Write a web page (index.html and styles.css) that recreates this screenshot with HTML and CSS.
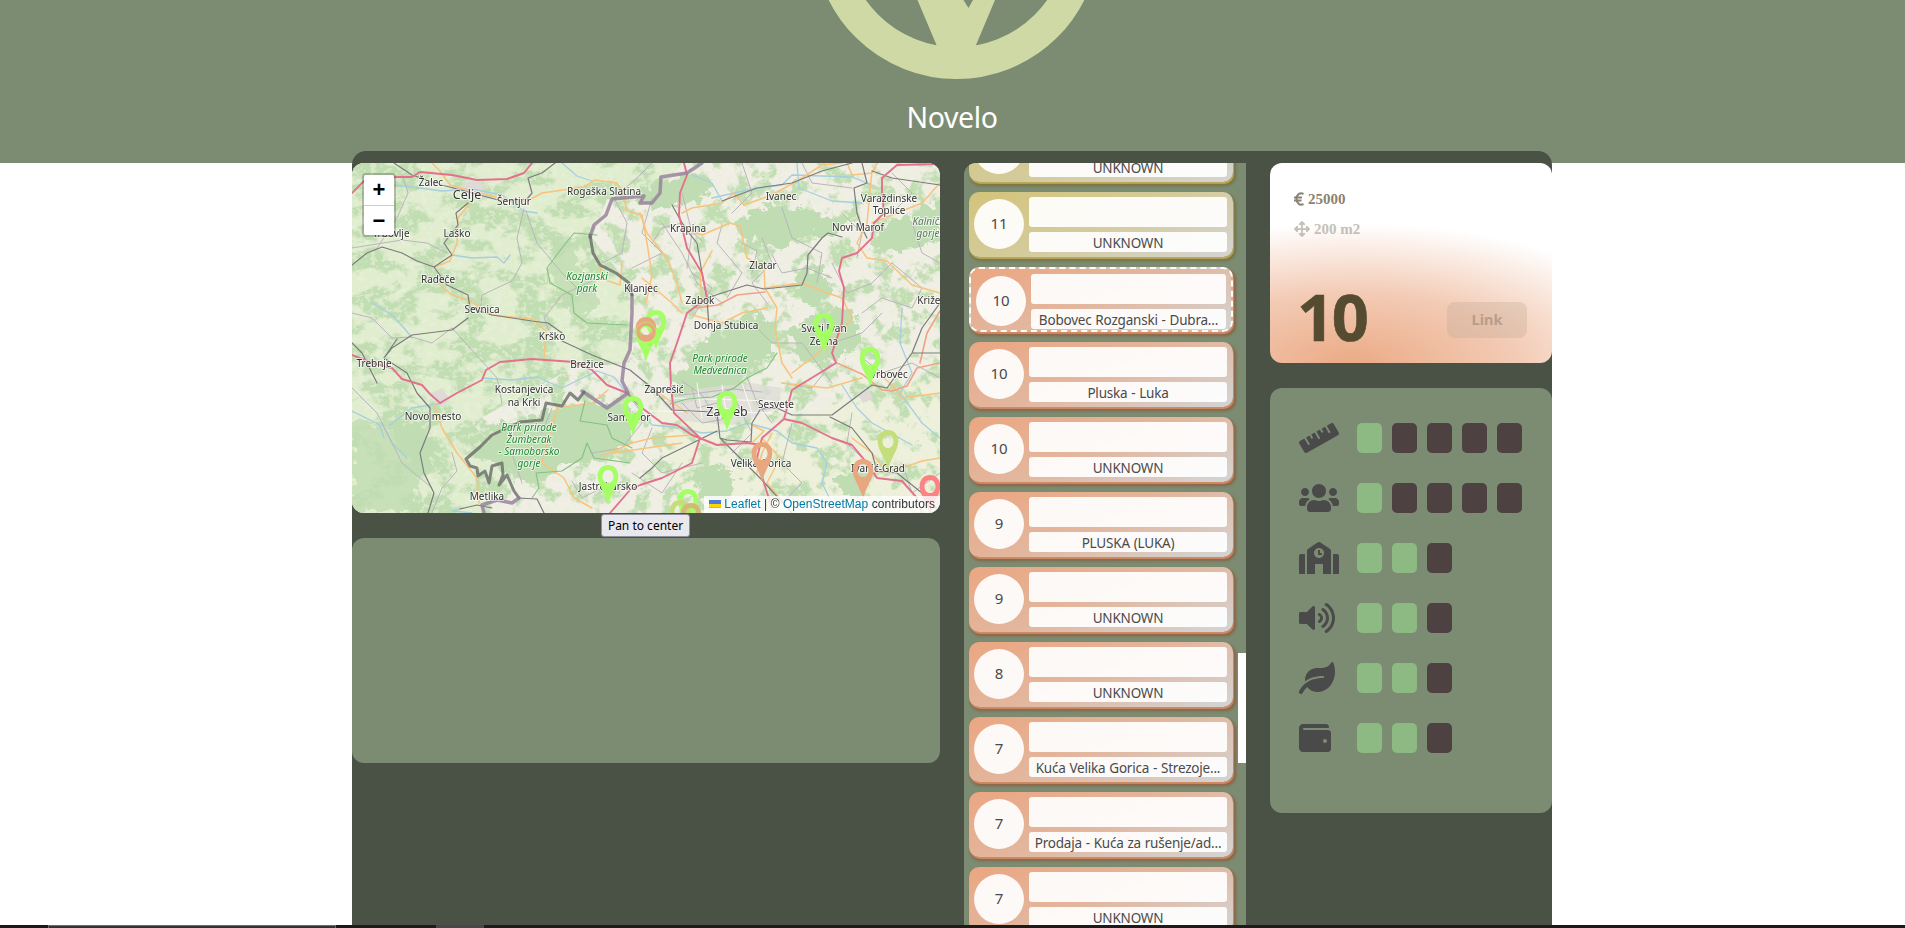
FILE: index.html
```html
<!DOCTYPE html>
<html lang="en">
<head>
<meta charset="utf-8">
<title>Novelo</title>
<link rel="stylesheet" href="styles.css">
</head>
<body>
<header class="header">
  <svg class="logo" width="290" height="80" viewBox="812 0 290 80">
    <circle cx="956.5" cy="-64" r="127" fill="none" stroke="#cfd9a6" stroke-width="32"/>
    <path d="M917.500 0L936.500 45L940 55H972L976 45L995 0H973L968.500 8L963.500 0Z" fill="#cfd9a6"/>
  </svg>
  <h1 class="title">Novelo</h1>
</header>
<main class="board">
  <section class="col-left">
    <div class="map">
      <svg class="map-canvas" width="588" height="350" viewBox="0 0 588 350">
        <defs>
          <filter id="woods" x="0" y="0" width="100%" height="100%" color-interpolation-filters="sRGB">
            <feTurbulence type="fractalNoise" baseFrequency=".03 .045" numOctaves="7" seed="8"/>
            <feColorMatrix values="0 0 0 0 .755  0 0 0 0 .865  0 0 0 0 .70  9 0 0 0 -4.1"/>
            <feComposite in2="SourceGraphic" operator="in"/>
          </filter>
          <filter id="patches" x="0" y="0" width="100%" height="100%" color-interpolation-filters="sRGB">
            <feTurbulence type="fractalNoise" baseFrequency=".05" numOctaves="6" seed="21"/>
            <feColorMatrix values="0 0 0 0 .755  0 0 0 0 .865  0 0 0 0 .70  10 0 0 0 -5.1"/>
            <feComposite in2="SourceGraphic" operator="in"/>
          </filter>
          <filter id="meadow" x="0" y="0" width="100%" height="100%" color-interpolation-filters="sRGB">
            <feTurbulence type="fractalNoise" baseFrequency=".16 .2" numOctaves="4" seed="4"/>
            <feColorMatrix values="0 0 0 0 .91  0 0 0 0 .945  0 0 0 0 .85  9 0 0 0 -4.7"/>
            <feComposite in2="SourceGraphic" operator="in"/>
          </filter>
          <filter id="ragged" x="0" y="0" width="100%" height="100%" color-interpolation-filters="sRGB">
            <feTurbulence type="fractalNoise" baseFrequency=".09" numOctaves="4" seed="3"/>
            <feDisplacementMap in="SourceGraphic" scale="26" xChannelSelector="R" yChannelSelector="G"/>
          </filter>
          <path id="pin" fill-rule="evenodd" d="M0-40C-6-40-10.300-35.500-10.300-29C-10.300-20-4-15 0 0C4-15 10.300-20 10.300-29C10.300-35.500 6-40 0-40ZM0-35C3.200-35 5.500-32.500 5.500-28.500S3.200-22 0-22S-5.500-24.500-5.500-28.500S-3.200-35 0-35Z"/>
        </defs>
        <rect width="588" height="350" fill="#f1eee5"/>
        <path d="M0 0H330L300 40L255 36L240 75L280 125L278 200L220 205L120 260L165 310L130 350H0Z" fill="#e1edcf"/>
        <path d="M330 350L300 240L420 260L588 210V350Z" fill="#eff0dc"/>
        <path d="M0 0H330L300 40L255 36L240 75L280 125L278 200L220 205L120 260L165 310L130 350H0Z" filter="url(#woods)"/>
        <path d="M330 0H588V350H130L165 310L120 260L220 205L278 200L280 125L240 75L255 36L300 40Z" filter="url(#patches)"/>
        <rect width="588" height="350" filter="url(#meadow)" opacity=".6"/>
        <g fill="#c0dcb2" filter="url(#ragged)">
          <path d="M380 60L400 49L430 42L470 52L495 62L480 75L450 72L430 85L400 80L385 72Z"/>
          <path d="M290 25L320 12L345 10L365 25L350 36L325 43L300 45L288 38Z"/>
          <path d="M520 75L545 55L588 40V78L560 82L530 92Z"/>
          <path d="M318 240L328 205L345 188L375 158L405 150L425 160L424 185L400 205L385 225L365 232L340 235Z"/>
          <path d="M116 292L150 262L195 250L235 238L275 236L285 280L250 295L210 302L190 320L160 315L145 300Z"/>
          <path d="M200 80L215 72L228 98L250 140L232 156L222 150L200 130Z" opacity=".8"/>
          <path d="M0 255L40 268L65 300L68 350H0Z" opacity=".8"/>
          <path d="M35 265L60 255L85 290L70 320Z"/>
          <path d="M440 165L470 145L500 148L510 170L495 195L460 200L440 190Z"/>
          <path d="M340 310L365 300L385 315L380 335L350 345Z"/>
          <path d="M448 110L470 100L480 130L465 145L450 135Z"/>
          <path d="M480 318L510 305L520 330L500 340Z"/>
        </g>
        <g fill="#dedbd7">
          <path d="M310 240L350 225L400 220L430 225L425 245L380 262L330 258Z" opacity=".75"/>
          <path d="M105 25l14-8 12 4 2 12-14 4zM78 230l12-4 8 10-9 8zM505 230l12-4 4 10-10 4zM505 300l15-2 5 10-14 3z"/>
        </g>
        <g fill="none" stroke-linejoin="round" stroke-linecap="round">
          <!-- Rivers -->
          <g stroke="#a5cfe0" stroke-width="1.300">
            <path d="M40 22L60 24L90 28L120 26L150 32L172 48L185 50M100 92L120 95L145 94L152 100L158 92M20 140L40 152L52 165L60 175"/>
            <path d="M130 215L160 217L185 214L210 225L245 208L262 214L276 232L300 262L330 265L350 270L375 268L395 260L425 268L440 280L465 285L475 300L470 320L480 340L520 342L588 338"/>
            <path d="M30 260L40 280L55 295M0 248L28 262L32 275M120 350L100 348L112 345M360 35L400 26L430 22L440 12L500 14L520 22M445 0L447 25L480 38L510 40M340 12L360 20L370 38M490 222L505 245L520 260L560 282M550 145L548 180L560 210L548 230L570 260L588 275M210 0L225 13L240 18M90 240L60 245L38 262"/>
          </g>
          <!-- Local roads -->
          <g stroke="#b9b5bd" stroke-width="1">
            <path d="M0 150L20 155L40 175L60 174L80 180L100 165M50 12L56 30L45 55L25 85M0 85L50 77L75 80L95 90M172 46L165 75L170 100L160 118L130 132L128 150M174 48L185 80L210 110L230 130L245 128M198 170L192 155L210 132L240 118M300 0L285 15L262 35L275 60L270 90L250 100M300 35L290 70L310 90L280 105M330 30L340 70L335 105M0 225L25 250L50 300L80 325M80 350L90 325L105 308L100 290M150 240L145 215L100 165M158 285L170 320M260 320L230 335L220 318M200 245L190 270"/>
            <path d="M370 62L365 80L390 110L375 135M410 75L420 100L400 120L415 140M430 45L440 75L470 90L465 120M340 110L360 125L340 155M310 60L330 90L345 120L370 140M480 100L495 130L520 120L540 100M490 50L510 70L505 95M540 100L570 125L560 145L530 135L510 150M470 150L480 180L510 170L530 150M560 60L570 90L588 100M400 160L420 180L450 180L480 220M430 220L460 225L480 200M385 240L400 270L380 290M330 240L350 260L380 255M340 225L345 245L365 240M300 265L290 290L310 310L350 300M440 260L430 300L450 320L430 340M500 250L495 280L515 300M550 300L560 330L588 310M450 0L460 20L500 25M390 0L400 30L380 50M540 10L560 30L540 50M510 195L530 210L560 200L588 215M280 310L310 330L330 300M240 290L270 285L290 260M310 225L330 232L380 226L410 229M330 218L350 232L365 257M395 214L405 240L420 260M300 80L310 65L330 60L350 78M390 80L405 88L400 110M420 92L430 110L455 105L480 115"/>
          </g>
          <g stroke="#fbf9f4" stroke-width="1"><path d="M320 235L420 238M345 220L350 255M370 222L375 256M390 220L400 250M300 248L420 250"/></g>
          <!-- Secondary roads -->
          <g stroke="#f8c37c" stroke-width="1.500">
            <path d="M80 0L88 8L98 22L116 27L132 31M132 31L160 38L175 38L190 30L232 24L243 17L265 20L271 30L275 48L290 52L295 80L300 112L294 140M248 100L250 116L268 122L270 100M118 40L106 55L105 80L98 98L83 104M88 122L100 132L118 138L140 152L180 156L194 168L192 195M82 242L90 265L105 290L125 315L127 340M256 227L240 240L205 245L198 270L190 300L212 315L222 335L240 345"/>
            <path d="M330 50L340 45L370 40L382 30L392 42L420 32L450 15L470 2L490 0M330 65L350 72L378 60L388 63L395 95L412 105L413 125M360 88L348 110L350 140M290 115L320 140L330 150M288 50L295 70L315 95L325 120L330 140M412 125L450 120L470 128L490 135L500 155L485 175L460 195L440 210M413 125L425 145L423 165L430 200L440 215M495 0L500 12L520 10L525 0M520 8L515 60L505 80L515 95L535 98L560 122L588 130M520 60L570 40L588 20M588 230L550 235L540 222L520 205M340 152L370 160L390 150L415 145M300 225L335 250M250 293L280 280L300 275L340 272M260 290L330 280M400 262L412 268L400 280M410 275L428 295L415 320L440 350M420 270L410 290L405 310M520 310L550 305L570 298L588 295M500 275L520 290L535 310M430 220L475 225L510 215"/>
          </g>
          <g stroke="#f2a285" stroke-width="1.600"><path d="M344 145L366 142L385 132L413 129M485 200L510 211L530 227L540 228L555 223L565 205L588 200M588 148L575 170L568 200"/></g>
          <!-- Railways -->
          <g stroke="#7b7c7b" stroke-width="1.200">
            <path d="M42 0L60 12L90 22L120 30L150 38M152 38L175 36L180 30L176 15L190 10L203 0M116 40L104 50L106 62L92 80L100 92L82 104L65 98L50 90L30 84L15 90L0 102M82 104L95 122L116 132L118 145L140 152L180 158L196 160L210 170M210 178L240 192L278 207L300 225L320 247L360 249M116 155L100 167L60 172L40 185L32 195M45 176L32 195L55 210L65 230L78 245L78 265L68 290L72 310L82 330L76 350M166 335L185 336L192 350M108 346L125 342L140 345M0 180L10 190L25 220"/>
            <path d="M320 42L333 65L345 80L350 110L355 135L357 165M355 135L370 130L395 122L412 126L450 122L455 110L456 92L470 75L476 70L490 74M370 38L405 25L440 20L470 8L500 0M510 0L515 20L502 25L505 50L510 65L515 75M588 22L540 15L520 8M588 140L570 165L560 190L535 225L520 222L480 252L440 252L425 245L410 246M365 250L368 275L375 277L399 279M399 279L400 260L408 247M368 275L410 317L440 350M478 254L500 265L520 290L525 308L545 310L570 330L588 350M365 268L310 295L300 305L288 315M560 190L588 190"/>
          </g>
          <!-- Motorways -->
          <g stroke="#e4718c" stroke-width="1.900">
            <path d="M0 30L12 18L45 14L60 14L68 9L100 12L125 17L155 16L172 10L180 0M0 192L20 200L40 205L50 216L70 222L78 231L88 240L105 230L130 217L134 207L148 199L180 196L222 199L240 207L255 222L275 230L290 245L310 260L325 262L340 272L365 282L395 280L410 282"/>
            <path d="M332 0L335 12L328 30L327 52L335 85L350 110L355 135L335 150L325 180L318 200L319 225L322 250L348 275L340 300L310 315L288 322L278 327L258 350M588 1L545 2L530 15L530 28L532 50L522 60L520 75L505 90L490 95L487 108L492 125L490 160L480 190L484 200L440 227L432 256L410 275L405 295L412 320L420 345M432 256L450 260L480 275L500 282L515 300L525 315L550 318L565 335L570 350"/>
          </g>
          <!-- Park outlines -->
          <path d="M245 72L222 70L210 85L195 105L198 120L220 132L222 150L235 160L275 162M233 238L228 258L255 262L260 275L280 285M184 310L210 308L230 295L235 280L242 295L278 300M184 310L187 325L180 335M318 241L335 236L360 234L382 225L395 215L415 205L425 190" stroke="#83c083" stroke-width="1.100"/>
          <!-- National border -->
          <path d="M350 0L338 8L335 10L309 14L308 30L300 40L288 40L292 33L260 36L254 52L242 62L238 74M280 132L280 150L278 187L272 200L270 218L276 230L255 245L230 228" stroke="#957d9b" stroke-width="3.500" opacity=".8"/>
          <path d="M238 72L241 90L248 102L264 110L277 120L280 132M232 229L226 237L218 230L210 243L194 240L190 257L168 259L140 272L128 284L114 296L118 303L125 305L126 313L133 308L137 320L140 303L150 300L151 312L147 322L155 312L162 328L167 335" stroke="#696b69" stroke-width="3" opacity=".8"/>
          <path d="M167 335L160 340L145 337L130 342L132 350" stroke="#957d9b" stroke-width="3.500" opacity=".8"/>
        </g>
        <g class="labels">
          <text x="79" y="23">Žalec</text><text class="city" x="115" y="36">Celje</text><text x="162" y="42">Šentjur</text><text x="252" y="32">Rogaška Slatina</text><text x="39" y="74">Trbovlje</text><text x="105" y="74">Laško</text><text x="86" y="120">Radeče</text><text x="130" y="150">Sevnica</text><text x="200" y="177">Krško</text><text x="289" y="129">Klanjec</text>
          <text x="429" y="37">Ivanec</text><text x="537" y="39">Varaždinske</text><text x="537" y="51">Toplice</text><text x="336" y="69">Krapina</text><text x="506" y="68">Novi Marof</text><text x="411" y="106">Zlatar</text><text x="348" y="141">Zabok</text><text x="374" y="166">Donja Stubica</text><text x="472" y="169">Sveti Ivan</text><text x="472" y="182">Zelina</text><text x="583" y="141">Križevci</text>
          <text x="22" y="204">Trebnje</text><text x="235" y="205">Brežice</text><text x="172" y="230">Kostanjevica</text><text x="172" y="243">na Krki</text><text x="81" y="257">Novo mesto</text><text x="277" y="258">Samobor</text><text x="135" y="337">Metlika</text><text x="256" y="327">Jastrebarsko</text>
          <text x="312" y="230">Zaprešić</text><text x="424" y="245">Sesvete</text><text x="537" y="215">Vrbovec</text><text class="city" x="375" y="253">Zagreb</text><text x="409" y="304">Velika Gorica</text><text x="526" y="309">Ivanić-Grad</text>
          <g class="park"><text x="235" y="117">Kozjanski</text><text x="235" y="129">park</text><text x="368" y="199">Park prirode</text><text x="368" y="211">Medvednica</text><text x="177" y="268">Park prirode</text><text x="177" y="280">Žumberak</text><text x="177" y="292">- Samoborsko</text><text x="177" y="304">gorje</text></g>
          <g class="hills"><text x="579" y="62">Kalničko</text><text x="576" y="74">gorje</text></g>
        </g>
        <use href="#pin" x="304" y="187" fill="#a4ff62"/><use href="#pin" x="294" y="194" fill="#e8a77e"/><use href="#pin" x="294" y="199" fill="#a4ff62"/><circle cx="294" cy="169" r="8" fill="none" stroke="#e8a77e" stroke-width="3.500"/><use href="#pin" x="472" y="190" fill="#a4ff62"/><use href="#pin" x="518" y="224" fill="#a4ff62"/><use href="#pin" x="281" y="273" fill="#a4ff62"/><use href="#pin" x="375" y="268" fill="#a4ff62"/><use href="#pin" x="256" y="342" fill="#a4ff62"/><use href="#pin" x="410" y="319" fill="#e8a77e"/><use href="#pin" x="536" y="307" fill="#c4de7c"/><use href="#pin" x="511" y="336" fill="#e8a77e"/><use href="#pin" x="578" y="352" fill="#ff8282"/><use href="#pin" x="336" y="366" fill="#a4ff62"/><use href="#pin" x="328" y="377" fill="#c4de7c"/><use href="#pin" x="339" y="380" fill="#d3b878"/>
      </svg>
      <div class="zoom"><span>+</span><span>−</span></div>
      <div class="credit"><svg width="12" height="8" viewBox="0 0 12 8"><path fill="#4c7be1" d="M0 0h12v4H0z"/><path fill="#ffd500" d="M0 4h12v3H0z"/><path fill="#e0bc00" d="M0 7h12v1H0z"/></svg> <a>Leaflet</a> | © <a>OpenStreetMap</a> contributors</div>
    </div>
    <div class="pan-row"><button class="pan">Pan to center</button></div>
    <div class="panel"></div>
  </section>
  <section class="list">
    <div class="cards">
      <article class="card olive"><b class="score">11</b><div class="body"><div class="thumb"></div><div class="name">UNKNOWN</div></div></article>
      <article class="card olive"><b class="score">11</b><div class="body"><div class="thumb"></div><div class="name">UNKNOWN</div></div></article>
      <article class="card selected"><b class="score">10</b><div class="body"><div class="thumb"></div><div class="name">Bobovec Rozganski - Dubra...</div></div></article>
      <article class="card"><b class="score">10</b><div class="body"><div class="thumb"></div><div class="name">Pluska - Luka</div></div></article>
      <article class="card"><b class="score">10</b><div class="body"><div class="thumb"></div><div class="name">UNKNOWN</div></div></article>
      <article class="card"><b class="score">9</b><div class="body"><div class="thumb"></div><div class="name">PLUSKA (LUKA)</div></div></article>
      <article class="card"><b class="score">9</b><div class="body"><div class="thumb"></div><div class="name">UNKNOWN</div></div></article>
      <article class="card"><b class="score">8</b><div class="body"><div class="thumb"></div><div class="name">UNKNOWN</div></div></article>
      <article class="card"><b class="score">7</b><div class="body"><div class="thumb"></div><div class="name">Kuća Velika Gorica - Strezoje...</div></div></article>
      <article class="card"><b class="score">7</b><div class="body"><div class="thumb"></div><div class="name">Prodaja - Kuća za rušenje/ad...</div></div></article>
      <article class="card"><b class="score">7</b><div class="body"><div class="thumb"></div><div class="name">UNKNOWN</div></div></article>
    </div>
    <div class="thumb-bar"></div>
  </section>
  <section class="col-right">
    <div class="summary">
      <div class="fact price"><svg width="10" height="14" viewBox="0 0 10 14" fill="none" stroke="currentColor" stroke-width="2"><path d="M9.500 2C6 .2 2.500 2.500 2.500 7S6 13.800 9.500 12M0 5.500H8M0 8.500H7.500"/></svg>25000</div>
      <div class="fact area"><svg width="16" height="16" viewBox="0 0 512 512" fill="currentColor"><path d="M352.201 425.775l-79.196 79.196c-9.373 9.373-24.568 9.373-33.941 0l-79.196-79.196c-15.119-15.119-4.411-40.971 16.971-40.970h51.162L228 284H127.196v51.162c0 21.382-25.851 32.090-40.971 16.971L7.029 272.937c-9.373-9.373-9.373-24.569 0-33.941L86.225 159.800c15.119-15.119 40.971-4.411 40.971 16.971V228H228V127.196h-51.230c-21.382 0-32.090-25.851-16.971-40.971l79.196-79.196c9.373-9.373 24.568-9.373 33.941 0l79.196 79.196c15.119 15.119 4.411 40.971-16.971 40.971h-51.162V228h100.804v-51.162c0-21.382 25.851-32.090 40.970-16.971l79.196 79.196c9.373 9.373 9.373 24.569 0 33.941L425.773 352.200c-15.119 15.119-40.971 4.411-40.970-16.971V284H284v100.804h51.230c21.382 0 32.090 25.851 16.971 40.971z"/></svg>200 m2</div>
      <div class="total"><strong>10</strong><span class="link">Link</span></div>
    </div>
    <div class="stats">
      <div class="row"><svg width="40" height="32" viewBox="0 0 640 512"><path d="M635.7 167.2L556.1 31.7c-8.8-15-28.3-20.1-43.5-11.5l-69 39.1L503.3 161c2.2 3.8.9 8.5-2.9 10.7l-13.8 7.8c-3.8 2.2-8.7.9-10.9-2.9L416 75l-55.2 31.3 27.9 47.4c2.2 3.8.9 8.5-2.9 10.7l-13.8 7.8c-3.8 2.2-8.7.9-10.9-2.9L333.2 122 278 153.3 337.8 255c2.2 3.7.9 8.5-2.9 10.7l-13.8 7.8c-3.8 2.2-8.7.9-10.9-2.9l-59.7-101.7-55.2 31.3 27.9 47.4c2.2 3.8.9 8.5-2.9 10.7l-13.8 7.8c-3.8 2.2-8.7.9-10.9-2.9l-27.9-47.5-55.2 31.3 59.7 101.7c2.2 3.7.9 8.5-2.9 10.7l-13.8 7.8c-3.8 2.2-8.7.9-10.9-2.9L84.900 262.900l-69 39.100C.7 310.700-4.600 329.800 4.200 344.800l79.600 135.600c8.800 15 28.300 20.100 43.500 11.500L624.100 210c15.200-8.600 20.400-27.800 11.600-42.800z"/></svg><i class="on"></i><i></i><i></i><i></i><i></i></div>
      <div class="row"><svg width="40" height="32" viewBox="0 0 640 512"><path d="M96 224c35.300 0 64-28.700 64-64s-28.700-64-64-64-64 28.700-64 64 28.700 64 64 64zm448 0c35.300 0 64-28.700 64-64s-28.700-64-64-64-64 28.700-64 64 28.700 64 64 64zm32 32h-64c-17.600 0-33.500 7.100-45.100 18.600 40.300 22.100 68.900 62 75.100 109.400h66c17.700 0 32-14.300 32-32v-32c0-35.300-28.700-64-64-64zm-256 0c61.900 0 112-50.100 112-112S381.900 32 320 32 208 82.100 208 144s50.100 112 112 112zm76.800 32h-8.300c-20.800 10-43.900 16-68.500 16s-47.600-6-68.500-16h-8.300C179.600 288 128 339.600 128 403.200V432c0 26.500 21.500 48 48 48h288c26.500 0 48-21.500 48-48v-28.800c0-63.600-51.600-115.200-115.200-115.200zm-223.700-13.400C161.500 263.100 145.600 256 128 256H64c-35.300 0-64 28.700-64 64v32c0 17.700 14.300 32 32 32h65.900c6.300-47.400 34.900-87.300 75.200-109.400z"/></svg><i class="on"></i><i></i><i></i><i></i><i></i></div>
      <div class="row"><svg width="40" height="32" viewBox="0 0 640 512"><path d="M0 224v272c0 8.840 7.160 16 16 16h80V192H32c-17.670 0-32 14.330-32 32zm360-48h-24v-40c0-4.420-3.580-8-8-8h-16c-4.420 0-8 3.580-8 8v64c0 4.420 3.580 8 8 8h48c4.420 0 8-3.580 8-8v-16c0-4.420-3.580-8-8-8zm137.750-63.960l-160-106.670a32.020 32.020 0 0 0-35.500 0l-160 106.670A32.002 32.002 0 0 0 128 138.660V512h128V368c0-8.840 7.160-16 16-16h96c8.840 0 16 7.160 16 16v144h128V138.670c0-10.700-5.350-20.690-14.250-26.630zM320 256c-44.180 0-80-35.820-80-80s35.820-80 80-80 80 35.820 80 80-35.820 80-80 80zm288-64h-64v320h80c8.840 0 16-7.160 16-16V224c0-17.670-14.330-32-32-32z"/></svg><i class="on"></i><i class="on"></i><i></i></div>
      <div class="row"><svg width="40" height="32" viewBox="0 0 640 512"><path d="M215.030 71.050L126.060 160H24c-13.260 0-24 10.740-24 24v144c0 13.250 10.740 24 24 24h102.060l88.970 88.950c15.030 15.030 40.970 4.470 40.970-16.970V88.020c0-21.460-25.960-31.980-40.970-16.970zm233.320-51.080c-11.170-7.330-26.180-4.240-33.510 6.950-7.340 11.170-4.220 26.180 6.950 33.510 66.270 43.490 105.820 116.600 105.820 195.580 0 78.980-39.550 152.090-105.820 195.580-11.170 7.320-14.290 22.340-6.950 33.500 7.040 10.710 21.930 14.560 33.510 6.950C528.270 439.580 576 351.330 576 256S528.270 72.430 448.350 19.970zM480 256c0-63.530-32.060-121.940-85.770-156.240-11.190-7.140-26.030-3.820-33.120 7.460s-3.780 26.210 7.410 33.360C408.270 165.970 432 209.110 432 256s-23.730 90.020-63.480 115.420c-11.190 7.140-14.500 22.070-7.410 33.360 6.510 10.360 21.120 15.140 33.120 7.460C447.940 377.940 480 319.540 480 256zm-141.770-76.870c-11.580-6.330-26.190-2.160-32.610 9.450-6.390 11.610-2.160 26.200 9.450 32.610C327.980 228.280 336 241.630 336 256c0 14.380-8.020 27.720-20.920 34.810-11.610 6.410-15.840 21-9.450 32.610 6.430 11.660 21.050 15.800 32.610 9.450 28.230-15.550 45.770-45 45.770-76.880s-17.540-61.320-45.780-76.860z"/></svg><i class="on"></i><i class="on"></i><i></i></div>
      <div class="row"><svg width="40" height="32" viewBox="0 0 640 512"><path d="M546.200 9.700c-5.600-12.500-21.600-13-28.300-1.200C486.900 62.400 431.400 96 368 96h-80C182 96 96 182 96 288c0 7 .8 13.700 1.500 20.500C161.300 262.800 253.400 224 384 224c8.800 0 16 7.200 16 16s-7.200 16-16 16C132.600 256 26 410.100 2.400 468c-6.600 16.300 1.200 34.900 17.500 41.600 16.400 6.800 35-1.100 41.800-17.300 1.500-3.600 20.900-47.900 71.900-90.600 32.400 43.900 94 85.800 174.900 77.200C465.500 467.500 576 326.700 576 154.300c0-50.200-10.800-102.200-29.800-144.600z"/></svg><i class="on"></i><i class="on"></i><i></i></div>
      <div class="row"><svg width="40" height="32" viewBox="0 0 640 512"><path d="M461.200 128H80c-8.840 0-16-7.160-16-16s7.160-16 16-16h384c8.840 0 16-7.160 16-16 0-26.510-21.490-48-48-48H64C28.650 32 0 60.650 0 96v320c0 35.350 28.650 64 64 64h397.200c28.020 0 50.800-21.530 50.800-48V176c0-26.470-22.780-48-50.800-48zM416 336c-17.670 0-32-14.330-32-32s14.330-32 32-32 32 14.330 32 32-14.330 32-32 32z"/></svg><i class="on"></i><i class="on"></i><i></i></div>
    </div>
  </section>
</main>
<footer class="taskbar"><span class="window"></span><span class="app"></span></footer>
</body>
</html>
```
FILE: styles.css
```css
* { box-sizing: border-box; }
body { margin: 0; height: 928px; overflow: hidden; background: #fff; font-family: "Noto Sans", "Open Sans", sans-serif; }
.header { height: 163px; background: #7c8c72; display: flex; flex-direction: column; align-items: center; }
.logo { display: block; flex: none; margin-left: 9px; }
.title { margin: 15px 0 0; padding-right: 1px; font-size: 28.500px; line-height: 44px; font-weight: 400; color: #fff; letter-spacing: -.4px; }
.board { position: relative; width: 1200px; height: 774px; margin: -12px 0 0 352px; padding-top: 12px; display: flex; gap: 24px; align-items: flex-start; background: #4a5246; border-radius: 14px 14px 0 0; overflow: hidden; }
.col-left { width: 588px; }
.map { position: relative; height: 350px; border-radius: 12px; overflow: hidden; }
.map-canvas { display: block; }
.labels { font-size: 10px; fill: #333; text-anchor: middle; paint-order: stroke; stroke: rgba(255,255,255,.65); stroke-width: 2px; stroke-linejoin: round; }
.labels .city { font-size: 12.500px; }
.park { font-style: italic; fill: #1a8a2c; }
.hills { font-style: italic; fill: #5a7a5a; }
.zoom { position: absolute; left: 10px; top: 10px; width: 34px; border: 2px solid rgba(0,0,0,.2); border-radius: 4px; background-clip: padding-box; overflow: hidden; }
.zoom span { display: block; height: 30px; background: #fff; font: bold 22px/30px "Liberation Sans", sans-serif; text-align: center; color: #000; }
.zoom span + span { border-top: 1px solid #ccc; }
.credit { position: absolute; right: 0; bottom: 0; height: 17px; padding: 0 5px; background: rgba(255,255,255,.8); font: 12px/17px "Liberation Sans", sans-serif; letter-spacing: .05px; color: #333; white-space: nowrap; }
.credit a { color: #0078a8; }
.pan-row { height: 25px; padding: 1px 1px 0 0; display: flex; justify-content: center; }
.pan { width: 89px; height: 23px; padding: 0; border: 1px solid #8f8f9d; border-radius: 3px; background: #e9e9ed; font: 12px/21px "Noto Sans", sans-serif; color: #000; white-space: nowrap; }
.panel { height: 225px; border-radius: 12px; background: #7c8c72; }
.list { width: 282px; height: 762px; display: flex; justify-content: space-between; background: #7c8c72; border-radius: 12px 0 0 0; overflow: hidden; }
.cards { margin-top: -46px; padding-left: 5px; display: flex; flex-direction: column; gap: 10px; }
.card { flex: none; width: 264px; height: 65px; padding: 5px; display: flex; gap: 5px; border-radius: 10px; background: linear-gradient(160deg, #eba681, #e2b79f 50%, #d4d2d0 95%); box-shadow: 1px 2px 1px #d08a64, 2px 3px 3px 1px rgba(140,84,54,.75); color: #4a4a4a; }
.card.olive { background: linear-gradient(160deg, #d3c47a, #d4cb9c 50%, #d4d3cf 95%); box-shadow: 1px 2px 1px #bca857, 2px 3px 3px 1px rgba(118,104,50,.75); }
.card.selected { border: 2px dashed #fff; }
.score { flex: none; width: 50px; height: 50px; margin-top: 2px; border-radius: 50%; background: rgba(255,255,255,.92); font-size: 15px; font-weight: 400; line-height: 48px; text-align: center; }
.body { width: 198px; min-width: 0; }
.card.selected .body { width: 195px; }
.thumb { height: 30px; border-radius: 3px; background: rgba(255,255,255,.92); }
.name { height: 20px; margin-top: 5px; padding: 0 5px; border-radius: 3px; background: rgba(255,255,255,.92); font-size: 13.500px; line-height: 23px; letter-spacing: -.2px; word-spacing: .5px; text-align: left; white-space: nowrap; display: flex; justify-content: center; }
.thumb-bar { width: 8px; height: 110px; margin-top: 490px; background: #fff; }
.col-right { width: 282px; }
.summary { height: 200px; padding: 26px 25px 0 24px; border-radius: 12px; background: radial-gradient(330px 140px at 29% 100%, #ebab86, #f3cbb5 50%, #fff 100%) #fff; }
.fact { height: 20px; display: flex; align-items: center; gap: 4px; font: bold 15px/20px "Liberation Serif", serif; }
.price { color: #8b8272; }
.area { margin-top: 10px; color: #c5bfb6; }
.total { margin-top: 33px; height: 92px; display: flex; justify-content: space-between; align-items: center; }
.total strong { margin: -5px 0 0 3px; font-size: 65px; line-height: 92px; color: #554b30; letter-spacing: -2.500px; -webkit-text-stroke: .6px #554b30; }
.link { width: 80px; height: 36px; margin-top: 4px; border-radius: 8px; background: rgba(190,165,145,.3); font-size: 14.500px; font-weight: 700; line-height: 35px; text-align: center; color: #b99d89; }
.stats { height: 425px; margin-top: 25px; padding: 34px 0 0 29px; border-radius: 12px; background: #7c8c72; }
.row { height: 32px; margin-bottom: 28px; display: flex; align-items: center; gap: 10px; }
.row svg { margin-right: 8px; fill: #4a4a4a; overflow: visible; }
.row i { width: 25px; height: 30px; border-radius: 5px; background: #4d4141; }
.row i.on { background: #8db982; }
.taskbar { height: 3px; display: flex; background: #1b1b1a; }
.window { width: 288px; margin-left: 48px; border: 1px solid #6c6c6c; border-bottom: 0; background: #333; }
.app { width: 48px; margin-left: 100px; background: #484848; }
```
